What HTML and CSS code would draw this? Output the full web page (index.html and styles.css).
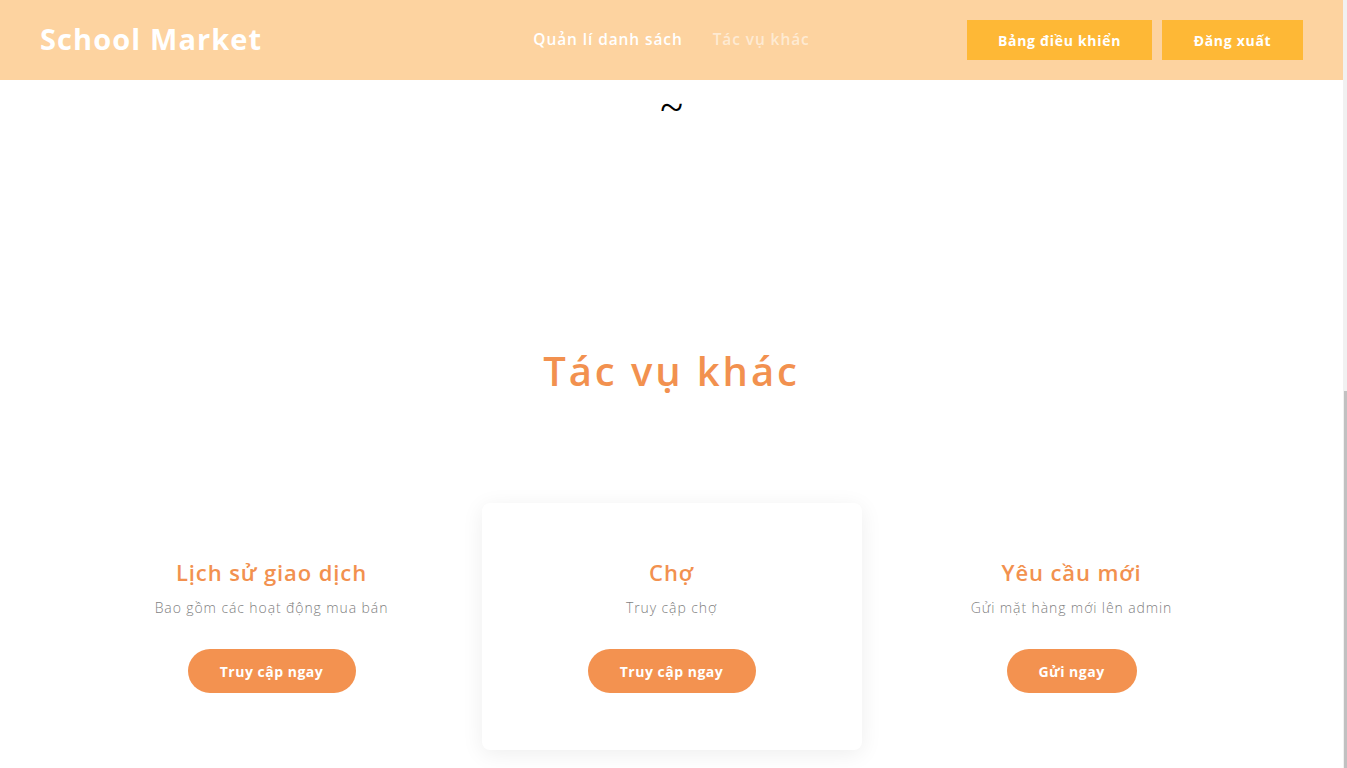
FILE: index.html
```html
<!DOCTYPE html>
<html lang="vi">
<head>
<meta charset="utf-8">
<title>School Market</title>
<link rel="stylesheet" href="styles.css">
</head>
<body>
<div class="page">
  <header class="topbar">
    <a class="logo" href="#">School Market</a>
    <nav class="nav">
      <a class="nav-link" href="#">Quản lí danh sách</a>
      <a class="nav-link nav-link--active" href="#">Tác vụ khác</a>
    </nav>
    <div class="actions">
      <a class="action-btn action-btn--wide" href="#">Bảng điều khiển</a>
      <a class="action-btn" href="#">Đăng xuất</a>
    </div>
  </header>

  <main class="content">
    <p class="tilde">~</p>
    <h1 class="section-title">Tác vụ khác</h1>

    <div class="cards">
      <div class="card-col">
        <div class="card">
          <h3 class="card-title">Lịch sử giao dịch</h3>
          <p class="card-text">Bao gồm các hoạt động mua bán</p>
          <a class="pill-btn pill-btn--wide" href="#">Truy cập ngay</a>
        </div>
      </div>
      <div class="card-col">
        <div class="card card--raised">
          <h3 class="card-title">Chợ</h3>
          <p class="card-text">Truy cập chợ</p>
          <a class="pill-btn pill-btn--wide" href="#">Truy cập ngay</a>
        </div>
      </div>
      <div class="card-col">
        <div class="card">
          <h3 class="card-title">Yêu cầu mới</h3>
          <p class="card-text">Gửi mặt hàng mới lên admin</p>
          <a class="pill-btn" href="#">Gửi ngay</a>
        </div>
      </div>
    </div>
  </main>
</div>
<div class="fake-scroll"><div class="fake-thumb"></div></div>
</body>
</html>
```

FILE: styles.css
```css
* { box-sizing: border-box; }
html, body { margin: 0; padding: 0; }
body {
  font-family: "Open Sans", "Noto Sans", sans-serif;
  background: #ffffff;
  overflow: hidden;
  height: 768px;
}
a { text-decoration: none; }

.page {
  width: 1343px;
}

.topbar {
  height: 80px;
  background: #fdd3a0;
  padding: 0 40px;
  display: grid;
  grid-template-columns: 1fr auto 1fr;
  align-items: center;
}
.logo {
  color: #ffffff;
  font-size: 29px;
  line-height: 36px;
  font-weight: 700;
  letter-spacing: 1.1px;
  justify-self: start;
  margin-top: -3px;
}
.nav {
  display: flex;
  gap: 30px;
  margin-top: -2px;
}
.nav-link {
  color: #ffffff;
  font-size: 15.5px;
  font-weight: 600;
  letter-spacing: 0.9px;
}
.nav-link--active {
  color: rgba(255, 255, 255, 0.55);
}
.actions {
  justify-self: end;
  display: flex;
  gap: 10px;
}
.action-btn {
  height: 40px;
  width: 141px;
  background: #feb836;
  color: #ffffff;
  font-size: 14px;
  font-weight: 700;
  letter-spacing: 0.7px;
  display: flex;
  align-items: center;
  justify-content: center;
}
.action-btn--wide { width: 185px; }

.content {
  display: flex;
  flex-direction: column;
  align-items: center;
}
.tilde {
  margin: 5px 0 0;
  font-family: "Liberation Serif", serif;
  font-size: 42px;
  line-height: 44px;
  color: #000;
}
.section-title {
  margin: 217px 0 0;
  font-size: 40px;
  line-height: 50px;
  font-weight: 600;
  letter-spacing: 2.9px;
  color: #f2914f;
}
.cards {
  margin-top: 107px;
  width: 1200px;
  display: grid;
  grid-template-columns: repeat(3, 1fr);
}
.card-col {
  padding: 0 10px;
}
.card {
  height: 247px;
  border-radius: 8px;
  display: flex;
  flex-direction: column;
  align-items: center;
  padding-top: 54px;
}
.card--raised {
  background: #fff;
  box-shadow: 0 4px 22px rgba(0, 0, 0, 0.07);
}
.card-title {
  margin: 0;
  font-size: 22px;
  line-height: 30px;
  font-weight: 600;
  letter-spacing: 0.9px;
  color: #f2914f;
}
.card-text {
  margin: 11px 0 0;
  font-size: 14px;
  line-height: 20px;
  font-weight: 300;
  letter-spacing: 0.9px;
  color: #7f7f7f;
}
.pill-btn {
  margin-top: 31px;
  height: 44px;
  width: 130px;
  border-radius: 22px;
  background: #f39250;
  color: #fff;
  font-size: 14px;
  font-weight: 700;
  letter-spacing: 0.5px;
  display: flex;
  align-items: center;
  justify-content: center;
}
.pill-btn--wide { width: 168px; }

.fake-scroll {
  position: fixed;
  top: 0;
  right: 0;
  width: 4px;
  height: 768px;
  background: #f1f1f1;
}
.fake-thumb {
  position: absolute;
  left: 1px;
  right: 0;
  top: 391px;
  bottom: 0;
  background: #c1c1c1;
}
```
